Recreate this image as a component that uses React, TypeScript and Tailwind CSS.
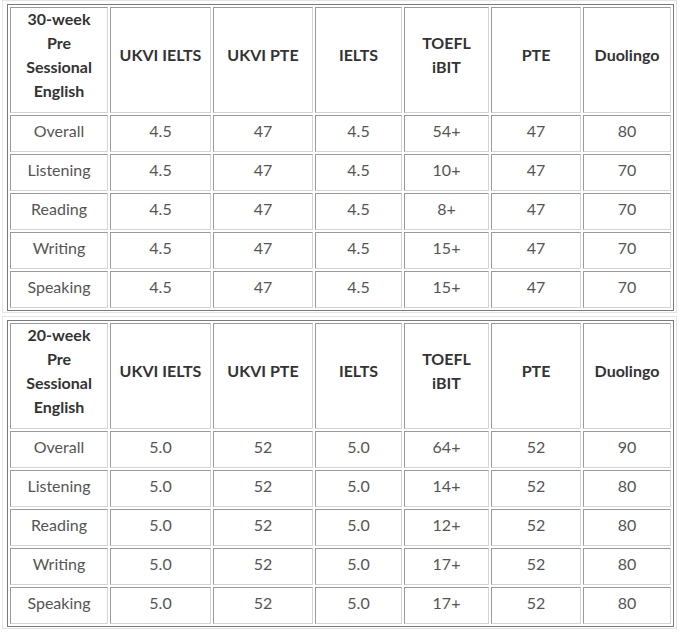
import React from "react";

interface ScoreTableProps {
  title: string[];
  rows: string[][];
}

const headers = [["UKVI IELTS"], ["UKVI PTE"], ["IELTS"], ["TOEFL", "iBIT"], ["PTE"], ["Duolingo"]];
const widths = ["w-[98px]", "w-[101px]", "w-[100px]", "w-[87px]", "w-[85px]", "w-[90px]", "w-[88px]"];

const cell =
  "border border-t-[#9a9a9a] border-l-[#9a9a9a] border-b-[#d4d4d4] border-r-[#d4d4d4] text-center align-middle p-0";

const ScoreTable = ({ title, rows }: ScoreTableProps) => {
  return (
    <div className="border border-[#e4e4e4] pt-[3px] pb-[1px] pl-[4px]">
      <table className="table-fixed w-[667px] border-separate border-spacing-[2px] border border-[#7a7a7a]">
        <colgroup>
          {widths.map((w, i) => (
            <col key={i} className={w} />
          ))}
        </colgroup>
        <thead>
          <tr className="h-[106px]">
            <th className={`${cell} font-bold text-[#333]`}>
              <div className="-mt-[10px]">
                {title.map((t) => (
                  <div key={t}>{t}</div>
                ))}
              </div>
            </th>
            {headers.map((h) => (
              <th key={h[0]} className={`${cell} font-bold text-[#333]`}>
                <div className="-mt-[10px]">
                  {h.map((t) => (
                    <div key={t}>{t}</div>
                  ))}
                </div>
              </th>
            ))}
          </tr>
        </thead>
        <tbody>
          {rows.map((r) => (
            <tr key={r[0]} className="h-[37px]">
              {r.map((v, i) => (
                <td key={i} className={`${cell} pb-[5px] text-[#555]`}>
                  {v}
                </td>
              ))}
            </tr>
          ))}
        </tbody>
      </table>
    </div>
  );
};

const App = () => {
  return (
    <div
      className="w-[679px] h-[633px] bg-white px-[2px] text-[16px] leading-6 flex flex-col gap-[3px]"
      style={{ fontFamily: "Lato, 'Liberation Sans', sans-serif" }}
    >
      <ScoreTable
        title={["30-week", "Pre", "Sessional", "English"]}
        rows={[
          ["Overall", "4.5", "47", "4.5", "54+", "47", "80"],
          ["Listening", "4.5", "47", "4.5", "10+", "47", "70"],
          ["Reading", "4.5", "47", "4.5", "8+", "47", "70"],
          ["Writing", "4.5", "47", "4.5", "15+", "47", "70"],
          ["Speaking", "4.5", "47", "4.5", "15+", "47", "70"],
        ]}
      />
      <ScoreTable
        title={["20-week", "Pre", "Sessional", "English"]}
        rows={[
          ["Overall", "5.0", "52", "5.0", "64+", "52", "90"],
          ["Listening", "5.0", "52", "5.0", "14+", "52", "80"],
          ["Reading", "5.0", "52", "5.0", "12+", "52", "80"],
          ["Writing", "5.0", "52", "5.0", "17+", "52", "80"],
          ["Speaking", "5.0", "52", "5.0", "17+", "52", "80"],
        ]}
      />
    </div>
  );
};

export default App;
